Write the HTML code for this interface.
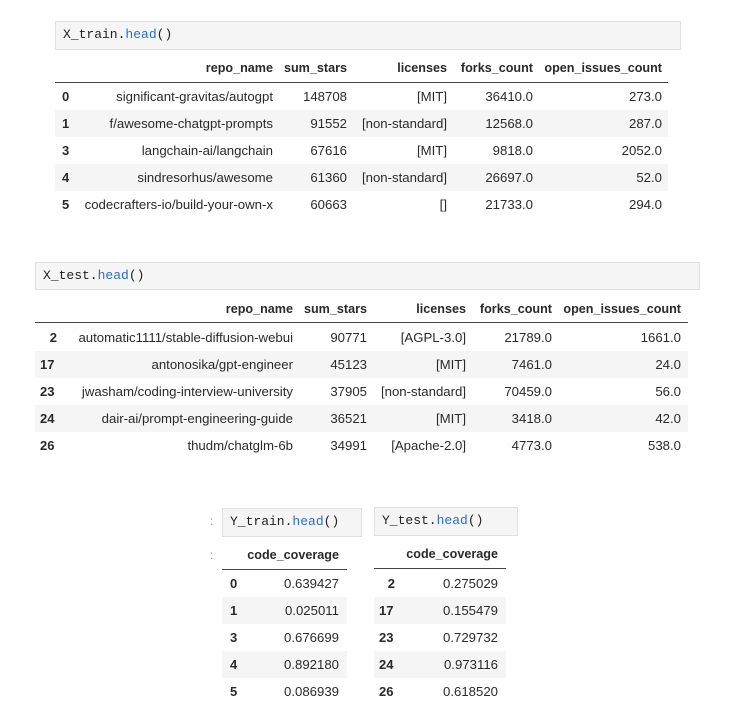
<!DOCTYPE html>
<html><head><meta charset="utf-8"><style>
body{margin:0;width:730px;height:724px;background:#fff;position:relative;overflow:hidden;font-family:"Liberation Sans",sans-serif;font-size:13.2px;color:#2a2a2a}
.code{position:absolute;background:#f5f5f5;border:1px solid #e0e0e0;font-family:"Liberation Mono",monospace;font-size:13px;color:#222;box-sizing:border-box;padding-left:7px;line-height:26px}
.code b{font-weight:normal;color:#2a6fc4}
.row{position:absolute;height:27px;line-height:27px}
.row.g{background:#f5f5f5}
.c{position:absolute;left:0;top:0;text-align:right;white-space:nowrap}
.h{font-weight:bold;font-size:12.6px}
.line{position:absolute;height:1px;background:#444}
.ix{font-weight:bold;position:absolute;top:0;font-size:13px}
.p{position:absolute;color:#999;font-size:12px}
</style></head><body>

<div class="code" style="left:55px;top:21px;width:626px;height:29px">X_train.<b>head</b>()</div>
<div class="row h" style="left:55px;top:55px;width:613px">
<span class="c" style="width:218px">repo_name</span><span class="c" style="width:292px">sum_stars</span><span class="c" style="width:392px">licenses</span><span class="c" style="width:478px">forks_count</span><span class="c" style="width:607px">open_issues_count</span></div>
<div class="line" style="left:55px;top:82px;width:613px"></div>
<div class="row" style="left:55px;top:83px;width:613px"><span class="ix" style="left:7px">0</span><span class="c" style="width:218px">significant-gravitas/autogpt</span><span class="c" style="width:292px">148708</span><span class="c" style="width:392px">[MIT]</span><span class="c" style="width:478px">36410.0</span><span class="c" style="width:607px">273.0</span></div>
<div class="row g" style="left:55px;top:110px;width:613px"><span class="ix" style="left:7px">1</span><span class="c" style="width:218px">f/awesome-chatgpt-prompts</span><span class="c" style="width:292px">91552</span><span class="c" style="width:392px">[non-standard]</span><span class="c" style="width:478px">12568.0</span><span class="c" style="width:607px">287.0</span></div>
<div class="row" style="left:55px;top:137px;width:613px"><span class="ix" style="left:7px">3</span><span class="c" style="width:218px">langchain-ai/langchain</span><span class="c" style="width:292px">67616</span><span class="c" style="width:392px">[MIT]</span><span class="c" style="width:478px">9818.0</span><span class="c" style="width:607px">2052.0</span></div>
<div class="row g" style="left:55px;top:164px;width:613px"><span class="ix" style="left:7px">4</span><span class="c" style="width:218px">sindresorhus/awesome</span><span class="c" style="width:292px">61360</span><span class="c" style="width:392px">[non-standard]</span><span class="c" style="width:478px">26697.0</span><span class="c" style="width:607px">52.0</span></div>
<div class="row" style="left:55px;top:191px;width:613px"><span class="ix" style="left:7px">5</span><span class="c" style="width:218px">codecrafters-io/build-your-own-x</span><span class="c" style="width:292px">60663</span><span class="c" style="width:392px">[]</span><span class="c" style="width:478px">21733.0</span><span class="c" style="width:607px">294.0</span></div>

<div class="code" style="left:35px;top:262px;width:665px;height:28px">X_test.<b>head</b>()</div>
<div class="row h" style="left:35px;top:296px;width:653px">
<span class="c" style="width:258px">repo_name</span><span class="c" style="width:332px">sum_stars</span><span class="c" style="width:431px">licenses</span><span class="c" style="width:517px">forks_count</span><span class="c" style="width:646px">open_issues_count</span></div>
<div class="line" style="left:35px;top:322px;width:653px"></div>
<div class="row" style="left:35px;top:324px;width:653px"><span class="c" style="width:22px;font-weight:bold;font-size:13px">2</span><span class="c" style="width:258px">automatic1111/stable-diffusion-webui</span><span class="c" style="width:332px">90771</span><span class="c" style="width:431px">[AGPL-3.0]</span><span class="c" style="width:517px">21789.0</span><span class="c" style="width:646px">1661.0</span></div>
<div class="row g" style="left:35px;top:351px;width:653px"><span class="ix" style="left:5px">17</span><span class="c" style="width:258px">antonosika/gpt-engineer</span><span class="c" style="width:332px">45123</span><span class="c" style="width:431px">[MIT]</span><span class="c" style="width:517px">7461.0</span><span class="c" style="width:646px">24.0</span></div>
<div class="row" style="left:35px;top:378px;width:653px"><span class="ix" style="left:5px">23</span><span class="c" style="width:258px">jwasham/coding-interview-university</span><span class="c" style="width:332px">37905</span><span class="c" style="width:431px">[non-standard]</span><span class="c" style="width:517px">70459.0</span><span class="c" style="width:646px">56.0</span></div>
<div class="row g" style="left:35px;top:405px;width:653px"><span class="ix" style="left:5px">24</span><span class="c" style="width:258px">dair-ai/prompt-engineering-guide</span><span class="c" style="width:332px">36521</span><span class="c" style="width:431px">[MIT]</span><span class="c" style="width:517px">3418.0</span><span class="c" style="width:646px">42.0</span></div>
<div class="row" style="left:35px;top:432px;width:653px"><span class="ix" style="left:5px">26</span><span class="c" style="width:258px">thudm/chatglm-6b</span><span class="c" style="width:332px">34991</span><span class="c" style="width:431px">[Apache-2.0]</span><span class="c" style="width:517px">4773.0</span><span class="c" style="width:646px">538.0</span></div>

<span class="p" style="left:210px;top:514px">:</span>
<div class="code" style="left:222px;top:508px;width:140px;height:29px">Y_train.<b>head</b>()</div>
<span class="p" style="left:210px;top:548px">:</span>
<div class="row h" style="left:222px;top:542px;width:125px"><span class="c" style="width:117px">code_coverage</span></div>
<div class="line" style="left:222px;top:569px;width:125px"></div>
<div class="row" style="left:222px;top:570px;width:125px"><span class="ix" style="left:8px">0</span><span class="c" style="width:117px">0.639427</span></div>
<div class="row g" style="left:222px;top:597px;width:125px"><span class="ix" style="left:8px">1</span><span class="c" style="width:117px">0.025011</span></div>
<div class="row" style="left:222px;top:624px;width:125px"><span class="ix" style="left:8px">3</span><span class="c" style="width:117px">0.676699</span></div>
<div class="row g" style="left:222px;top:651px;width:125px"><span class="ix" style="left:8px">4</span><span class="c" style="width:117px">0.892180</span></div>
<div class="row" style="left:222px;top:678px;width:125px"><span class="ix" style="left:8px">5</span><span class="c" style="width:117px">0.086939</span></div>

<div class="code" style="left:374px;top:507px;width:144px;height:29px">Y_test.<b>head</b>()</div>
<div class="row h" style="left:374px;top:541px;width:132px"><span class="c" style="width:124px">code_coverage</span></div>
<div class="line" style="left:374px;top:568px;width:132px"></div>
<div class="row" style="left:374px;top:570px;width:132px"><span class="c" style="width:21px;font-weight:bold;font-size:13px">2</span><span class="c" style="width:124px">0.275029</span></div>
<div class="row g" style="left:374px;top:597px;width:132px"><span class="ix" style="left:5px">17</span><span class="c" style="width:124px">0.155479</span></div>
<div class="row" style="left:374px;top:624px;width:132px"><span class="ix" style="left:5px">23</span><span class="c" style="width:124px">0.729732</span></div>
<div class="row g" style="left:374px;top:651px;width:132px"><span class="ix" style="left:5px">24</span><span class="c" style="width:124px">0.973116</span></div>
<div class="row" style="left:374px;top:678px;width:132px"><span class="ix" style="left:5px">26</span><span class="c" style="width:124px">0.618520</span></div>
</body></html>
